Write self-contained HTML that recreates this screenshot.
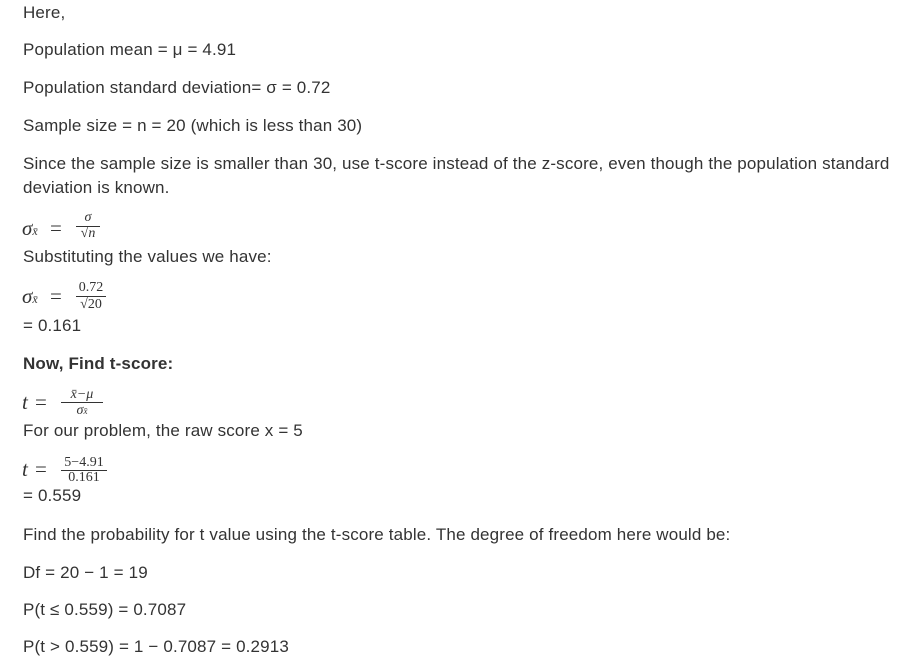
<!DOCTYPE html><html><head><style>
body{margin:0;width:912px;height:662px;background:#fff;position:relative;font-family:"Liberation Sans",sans-serif;font-size:17px;letter-spacing:0.15px;color:#333;overflow:hidden}
.l{position:absolute;left:23px;line-height:20px;white-space:nowrap}
.m{position:absolute;font-family:"Liberation Serif",serif;font-style:italic;white-space:nowrap;line-height:1;letter-spacing:0}
.f{position:absolute;font-family:"Liberation Serif",serif;font-size:14px;text-align:center;line-height:1;letter-spacing:0}
.bar{position:absolute;height:1px;background:#333}
</style></head><body>
<div class="l" style="top:3px">Here,</div>
<div class="l" style="top:40px">Population mean = μ = 4.91</div>
<div class="l" style="top:78px">Population standard deviation= σ = 0.72</div>
<div class="l" style="top:116px">Sample size = n = 20 (which is less than 30)</div>
<div class="l" style="top:154px">Since the sample size is smaller than 30, use t-score instead of the z-score, even though the population standard</div>
<div class="l" style="top:178px">deviation is known.</div>

<div class="m" style="left:22px;top:218px;font-size:21px">σ<span style="font-size:12px">x̄</span></div>
<div class="m" style="left:50px;top:218px;font-size:21px;font-style:normal">=</div>
<div class="f" style="left:76px;top:211px;width:24px;font-style:italic">σ</div>
<div class="bar" style="left:76px;top:226px;width:24px"></div>
<div class="f" style="left:76px;top:227px;width:24px">√<i>n</i></div>
<div class="l" style="top:247px">Substituting the values we have:</div>

<div class="m" style="left:22px;top:286px;font-size:21px">σ<span style="font-size:12px">x̄</span></div>
<div class="m" style="left:50px;top:286px;font-size:21px;font-style:normal">=</div>
<div class="f" style="left:76px;top:281px;width:30px">0.72</div>
<div class="bar" style="left:76px;top:296px;width:30px"></div>
<div class="f" style="left:76px;top:298px;width:30px">√20</div>
<div class="l" style="top:316px">= 0.161</div>
<div class="l" style="top:354px;font-weight:bold">Now, Find t-score:</div>

<div class="m" style="left:22px;top:392px;font-size:21px">t</div>
<div class="m" style="left:35px;top:392px;font-size:21px;font-style:normal">=</div>
<div class="f" style="left:61px;top:388px;width:42px;font-style:italic">x̄−μ</div>
<div class="bar" style="left:61px;top:402px;width:42px"></div>
<div class="f" style="left:61px;top:404px;width:42px;font-style:italic">σ<span style="font-size:9px">x̄</span></div>
<div class="l" style="top:421px">For our problem, the raw score x = 5</div>

<div class="m" style="left:22px;top:459px;font-size:21px">t</div>
<div class="m" style="left:35px;top:459px;font-size:21px;font-style:normal">=</div>
<div class="f" style="left:61px;top:456px;width:46px">5−4.91</div>
<div class="bar" style="left:61px;top:470px;width:46px"></div>
<div class="f" style="left:61px;top:471px;width:46px">0.161</div>
<div class="l" style="top:486px">= 0.559</div>
<div class="l" style="top:525px">Find the probability for t value using the t-score table. The degree of freedom here would be:</div>
<div class="l" style="top:563px">Df = 20 − 1 = 19</div>
<div class="l" style="top:600px">P(t ≤ 0.559) = 0.7087</div>
<div class="l" style="top:637px">P(t &gt; 0.559) = 1 − 0.7087 = 0.2913</div>
</body></html>
